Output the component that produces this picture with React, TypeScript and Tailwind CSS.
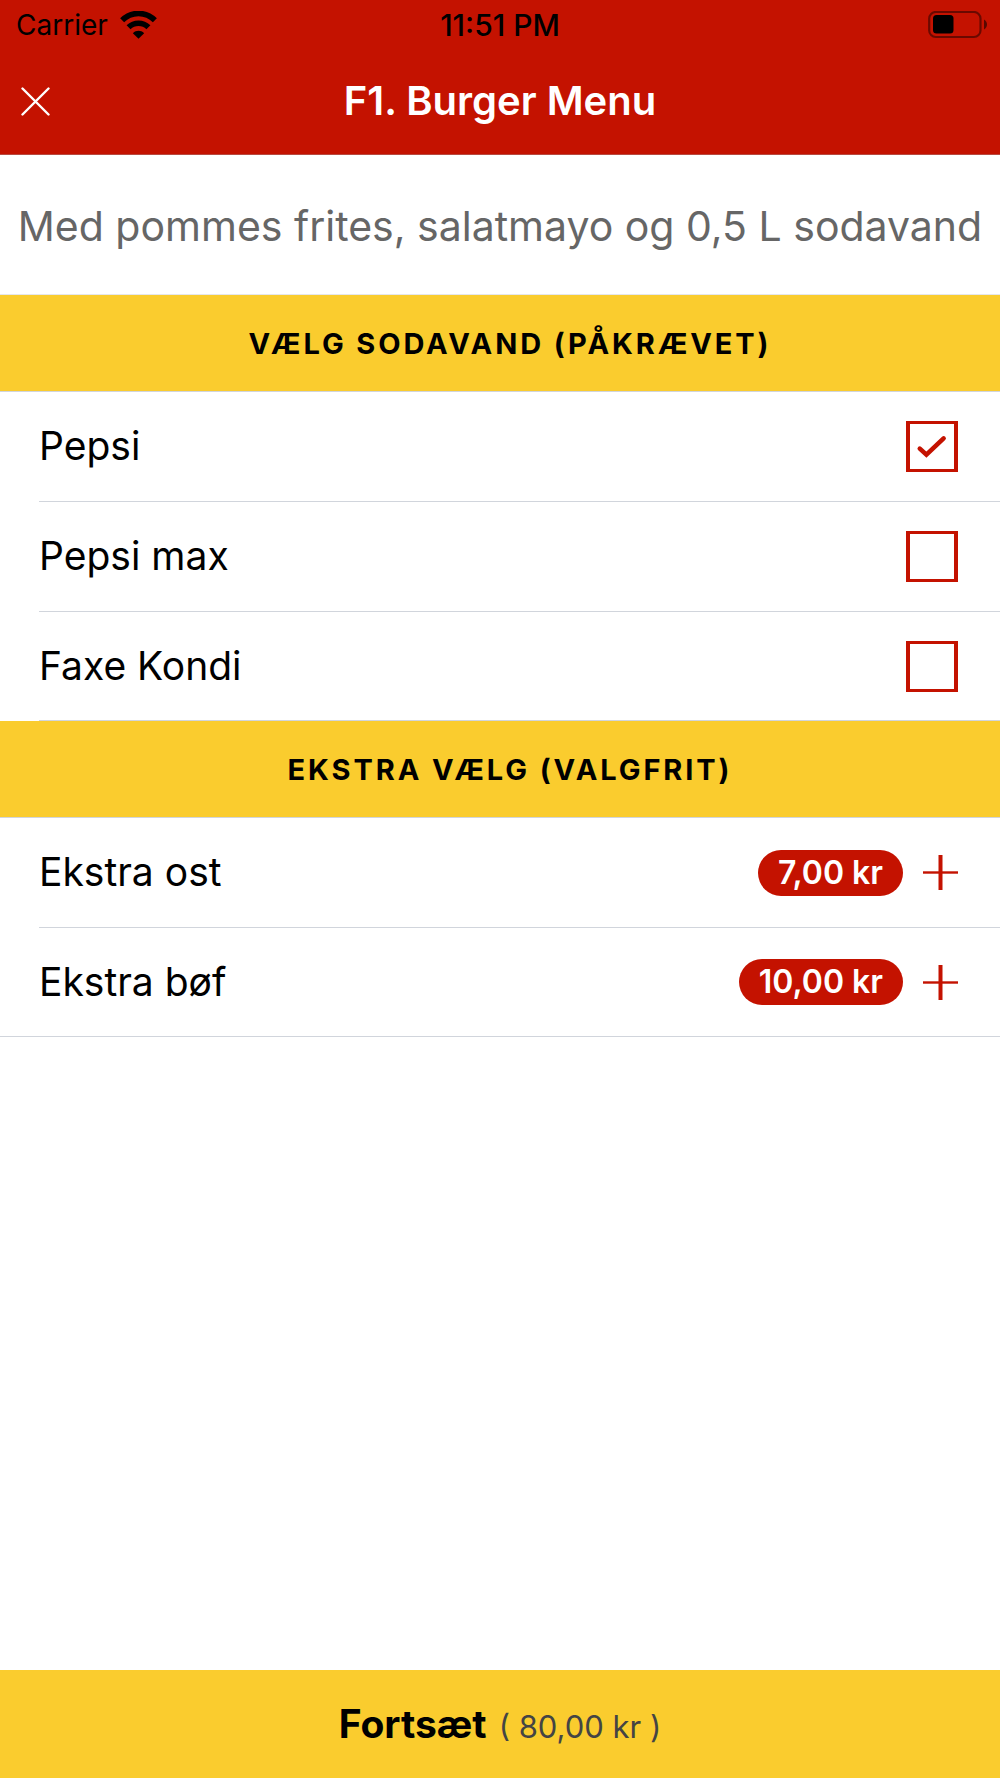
import React, { useState } from 'react';

interface Extra {
  id: string;
  name: string;
  price: string;
}

const sodas: string[] = ['Pepsi', 'Pepsi max', 'Faxe Kondi'];

const extras: Extra[] = [
  { id: 'cheese', name: 'Ekstra ost', price: '7,00 kr' },
  { id: 'patty', name: 'Ekstra bøf', price: '10,00 kr' }
];

const WifiIcon: React.FC = () => (
  <svg width="37" height="28" viewBox="0 0 38 28" fill="none" aria-hidden="true">
    <path d="M2.2 9.2C11.5 -0.2 26.5 -0.2 35.8 9.2" stroke="black" strokeWidth="5.8" />
    <path d="M8.8 16.4C14.5 10.8 23.5 10.8 29.2 16.4" stroke="black" strokeWidth="5.8" />
    <path d="M19 28L13.2 22.4C16.6 19.2 21.4 19.2 24.8 22.4Z" fill="black" />
  </svg>
);

const BatteryIcon: React.FC = () => (
  <svg width="60" height="28" viewBox="0 0 60 28" fill="none" aria-hidden="true">
    <rect x="1.2" y="1" width="51.3" height="25" rx="6.5" stroke="black" strokeOpacity="0.45" strokeWidth="2.2" />
    <rect x="5" y="4" width="20.5" height="18.5" rx="3.5" fill="black" />
    <path d="M56 8.5C60 11 60 16 56 18.5Z" fill="black" fillOpacity="0.55" />
  </svg>
);

const SectionHeading: React.FC<{ children: React.ReactNode }> = ({ children }) => (
  <h2 className="flex h-[97px] items-center justify-center border-b border-gray-300 bg-[#facc2e] pl-5 pt-0.5 text-[29px] font-bold uppercase tracking-widest">
    {children}
  </h2>
);

const App: React.FC = () => {
  const [selected, setSelected] = useState<string>('Pepsi');

  return (
    <div className="flex min-h-screen flex-col bg-white font-['Inter',sans-serif] text-black">
      <header className="border-b border-[#b84a40] bg-[#c41200]">
        <div className="grid h-[50px] grid-cols-3 items-center px-3 text-[28px]">
          <div className="flex items-center gap-3 pl-1">
            <span>Carrier</span>
            <WifiIcon />
          </div>
          <span className="text-center text-[30px] font-medium">11:51 PM</span>
          <div className="flex justify-end">
            <BatteryIcon />
          </div>
        </div>
        <div className="grid h-[104px] grid-cols-[60px_1fr_60px] items-center px-3 pb-0.5 text-white">
          <button type="button" aria-label="Luk" className="flex h-12 w-12 items-center justify-center">
            <svg width="30" height="30" viewBox="0 0 30 30" fill="none" stroke="white" strokeWidth="2.4" strokeLinecap="round">
              <path d="M1.5 2.5L27.5 28.5M27.5 2.5L1.5 28.5" />
            </svg>
          </button>
          <h1 className="text-center text-[40px] font-semibold">F1. Burger Menu</h1>
        </div>
      </header>

      <main className="flex-1">
        <p className="flex h-[140px] items-center justify-center border-b border-gray-200 pt-1 text-[41px] text-[#666666]">
          Med pommes frites, salatmayo og 0,5 L sodavand
        </p>

        <section>
          <SectionHeading>Vælg sodavand (påkrævet)</SectionHeading>
          <ul className="pl-[39px]">
            {sodas.map((soda) => (
              <li key={soda} className="h-[110px] border-b border-gray-300 last:h-[109px]">
                <label className="flex h-full items-center justify-between pr-[42px] text-[39px]">
                  <span>{soda}</span>
                  <span className="relative h-[51px] w-[52px]">
                    <input
                      type="checkbox"
                      checked={selected === soda}
                      onChange={() => setSelected(soda)}
                      className="block h-full w-full appearance-none border-x-4 border-y-[3px] border-[#c41200]"
                    />
                    {selected === soda && (
                      <svg className="pointer-events-none absolute inset-0" width="52" height="51" viewBox="0 0 52 51" fill="none" stroke="#c41200" strokeWidth="4.6" strokeLinecap="round">
                        <path d="M13.8 27.6L20.4 33.6L37.6 17.4" />
                      </svg>
                    )}
                  </span>
                </label>
              </li>
            ))}
          </ul>
        </section>

        <section>
          <SectionHeading>Ekstra vælg (valgfrit)</SectionHeading>
          <ul className="border-b border-gray-300">
            {extras.map((extra) => (
              <li key={extra.id} className="ml-[39px] flex h-[110px] items-center border-b border-gray-300 pr-[42px] last:h-[108px] last:border-b-0">
                <span className="flex-1 text-[39px]">{extra.name}</span>
                <span className="flex h-[46px] items-center rounded-full bg-[#c41200] px-5 text-[32px] font-semibold text-white">
                  {extra.price}
                </span>
                <button type="button" aria-label={`Tilføj ${extra.name}`} className="ml-5">
                  <svg width="35" height="35" viewBox="0 0 35 35" fill="#c41200">
                    <rect x="0" y="16.3" width="35" height="2.4" />
                    <rect x="15.5" y="0" width="4" height="35" />
                  </svg>
                </button>
              </li>
            ))}
          </ul>
        </section>
      </main>

      <button type="button" className="flex h-[108px] items-center justify-center bg-[#facc2e]">
        <span className="flex items-baseline gap-3">
          <span className="text-[39px] font-bold">Fortsæt</span>
          <span className="text-[31px] text-[#444444]">( 80,00 kr )</span>
        </span>
      </button>
    </div>
  );
};

export default App;
